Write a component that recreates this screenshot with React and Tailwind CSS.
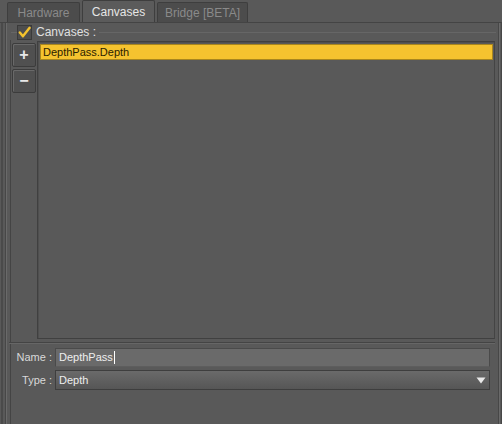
import React from "react";

export default function App() {
  const font = { fontFamily: '"Liberation Sans", Arial, sans-serif' };
  return (
    <div className="w-[502px] h-[424px] bg-[#595959] overflow-hidden flex flex-col text-[11px]" style={font}>
      {/* tabs */}
      <div className="h-[22px] flex items-end pl-[7px] gap-[2px] shrink-0">
        <div className="w-[73px] h-[20px] bg-[#4c4c4c] border border-[#3e3e3e] border-b-0 rounded-t-[2px] flex items-center justify-center text-[#8a8a8a] text-[12px]">Hardware</div>
        <div className="w-[73px] h-[22px] bg-[#5b5b5b] border border-[#3e3e3e] border-b-0 rounded-t-[2px] flex items-center justify-center text-[#e6e6e6] text-[12px]">Canvases</div>
        <div className="w-[91px] h-[20px] bg-[#4c4c4c] border border-[#3e3e3e] border-b-0 rounded-t-[2px] flex items-center justify-center text-[#8a8a8a] text-[12px]">Bridge [BETA]</div>
      </div>
      {/* frame */}
      <div className="flex-1 flex border-t border-[#444] min-h-0">
        <div className="w-[8px] shrink-0 flex">
          <div className="w-[2px] bg-[#4a4a4a] ml-[1px]" />
          <div className="w-[1px] bg-[#474747] ml-[2px]" />
          <div className="w-[1px] bg-[#6a6a6a] ml-[0px]" />
        </div>
        <div className="flex-1 flex flex-col min-w-0">
          {/* group header */}
          <div className="h-[16px] flex items-center relative mt-[1px] shrink-0">
            <div className="absolute left-[3px] right-[0px] top-[8px] h-[1px] bg-[#444] border-b border-[#666]" />
            <div className="relative ml-[9px] w-[15px] h-[15px] bg-[#4d4d4d] border border-[#3a3a3a] flex items-center justify-center">
              <svg width="14" height="13" viewBox="0 0 14 13">
                <path d="M2 6.5 L5.3 10.5 L12.5 1.5" fill="none" stroke="#f3c22d" strokeWidth="2.6" strokeLinejoin="round" strokeLinecap="round" />
              </svg>
            </div>
            <div className="relative bg-[#595959] pl-[4px] pr-[3px] text-[#e0e0e0] text-[12px] leading-none">Canvases :</div>
          </div>
          <div className="flex-1 flex min-h-0 pr-[1px]">
            <div className="w-[2px] border-l border-[#444] ml-[2px]" />
            <div className="flex-1 flex flex-col min-w-0">
              <div className="flex flex-1 min-h-0 pt-[1px]">
                <div className="flex flex-col gap-[2px] pr-[1px] pt-[2px]">
                  <div className="w-[24px] h-[24px] bg-[#505050] border border-[#3c3c3c] shadow-[inset_1px_1px_0_#696969] rounded-[2px] flex items-center justify-center text-[#e8e8e8] text-[16px] font-bold leading-none">+</div>
                  <div className="w-[24px] h-[24px] bg-[#505050] border border-[#3c3c3c] shadow-[inset_1px_1px_0_#696969] rounded-[2px] flex items-center justify-center text-[#e8e8e8] text-[16px] font-bold leading-none">−</div>
                </div>
                <div className="flex-1 border border-[#404040] border-r-[#444] bg-[#595959] shadow-[inset_1px_1px_0_#4f4f4f] p-[2px] pr-[1px] mb-[3px]">
                  <div className="h-[16px] bg-[#f5c32f] border border-[#a8861e] flex items-center pl-[2px] text-[#2b2200] text-[11px]">DepthPass.Depth</div>
                </div>
              </div>
              <div className="h-[1px] bg-[#444] border-b border-[#666] -ml-[3px] box-content shrink-0" />
              <div className="flex flex-col gap-[3px] pt-[4px] pb-[34px] pr-[5px]">
                <div className="flex items-center h-[19px]">
                  <div className="w-[43px] text-right text-[#d8d8d8] pr-[3px]">Name :</div>
                  <div className="flex-1 h-[19px] bg-[#6a6a6a] border border-[#4a4a4a] border-b-[#5d5d5d] flex items-center pl-[3px] text-[#eeeeee]">
                    DepthPass<span className="inline-block w-[1px] h-[13px] bg-white ml-[1px]" />
                  </div>
                </div>
                <div className="flex items-center h-[20px]">
                  <div className="w-[43px] text-right text-[#d8d8d8] pr-[3px]">Type :</div>
                  <div className="flex-1 h-[20px] bg-gradient-to-b from-[#6a6a6a] to-[#565656] border border-[#3e3e3e] flex items-center justify-between pl-[3px] pr-[3px] text-[#eeeeee]">
                    <span>Depth</span>
                    <svg width="10" height="7" viewBox="0 0 10 7"><path d="M0.5 0.5 L9.5 0.5 L5 6.5 Z" fill="#e8e8e8" /></svg>
                  </div>
                </div>
              </div>
            </div>
          </div>
        </div>
        <div className="w-[6px] shrink-0 flex justify-end">
          <div className="w-[1px] bg-[#474747]" />
          <div className="w-[1px] bg-[#6a6a6a]" />
          <div className="w-[1px] bg-[#474747] ml-[1px]" />
        </div>
      </div>
    </div>
  );
}
